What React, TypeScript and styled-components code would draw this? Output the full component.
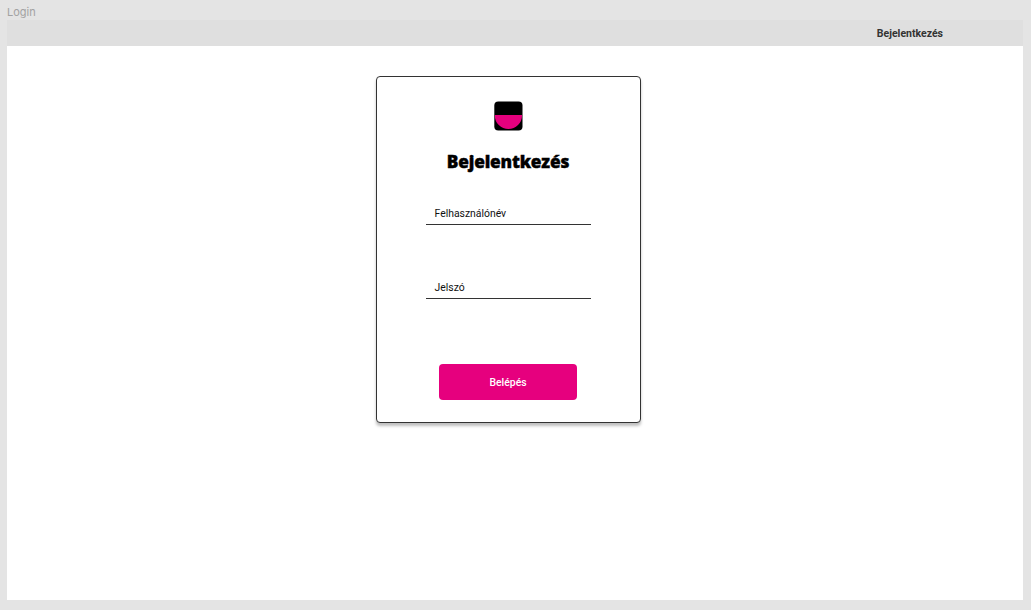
import React from 'react';
import styled, { createGlobalStyle } from 'styled-components';

const GlobalStyle = createGlobalStyle`
  *, *::before, *::after { box-sizing: border-box; }
  body { margin: 0; background: #e4e4e4; font-family: Roboto, sans-serif; }
`;

const Canvas = styled.div`
  display: flex;
  flex-direction: column;
  width: 1031px;
  height: 610px;
  padding: 0 8px 10px 7px;
  overflow: hidden;
`;

const FrameLabel = styled.div`
  flex: none;
  height: 20px;
  padding-top: 5px;
  font: 400 11px/14px Inter, sans-serif;
  color: #a2a2a2;
`;

const Frame = styled.main`
  flex: 1;
  display: flex;
  flex-direction: column;
  align-items: center;
  background: #fff;
`;

const TopBar = styled.header`
  display: flex;
  justify-content: flex-end;
  align-items: center;
  align-self: stretch;
  height: 26px;
  padding: 1px 80px 0 0;
  background: #dfdfdf;
`;

const NavLink = styled.a`
  font-size: 10.5px;
  line-height: 15px;
  font-weight: 700;
  color: #333;
`;

const Card = styled.form`
  display: flex;
  flex-direction: column;
  align-items: center;
  width: 265px;
  height: 347px;
  margin: 30px 13px 0 0;
  padding: 24px 1px 0 0;
  border: 1px solid #333;
  border-radius: 4px;
  background: #fff;
  box-shadow: 0 3px 3px rgba(0, 0, 0, 0.25);
`;

const Logo = styled.svg`
  display: block;
  width: 29px;
  height: 30px;
`;

const Title = styled.h1`
  margin: 17px 0 0;
  font: 800 17.3px/28px 'Open Sans', sans-serif;
  letter-spacing: -0.2px;
  -webkit-text-stroke: 0.4px #000;
  color: #000;
`;

const Field = styled.label<{ $gap: number }>`
  display: block;
  width: 165px;
  height: 24px;
  margin-top: ${({ $gap }) => $gap}px;
  padding: 6px 9px 0;
  border-bottom: 1px solid #333;
  font-size: 10.4px;
  line-height: 14px;
  color: #111;
`;

const Submit = styled.button`
  width: 138px;
  height: 36px;
  margin-top: 65px;
  padding: 1px 0 0;
  border: 0;
  border-radius: 4px;
  background: #e6007e;
  font: 500 10.4px/15px Roboto, sans-serif;
  color: #fff;
`;

export default function App() {
  return (
    <>
      <GlobalStyle />
      <Canvas>
        <FrameLabel>Login</FrameLabel>
        <Frame>
          <TopBar>
            <NavLink>Bejelentkezés</NavLink>
          </TopBar>
          <Card>
            <Logo viewBox="0 0 29 30" aria-hidden="true">
              <rect x="0.3" y="0.4" width="28.2" height="29" rx="4" fill="#000" />
              <path d="M0.8 14h27.2v0.4a13.6 13.6 0 0 1-27.2 0z" fill="#e6007e" />
            </Logo>
            <Title>Bejelentkezés</Title>
            <Field $gap={25}>Felhasználónév</Field>
            <Field $gap={50}>Jelszó</Field>
            <Submit type="button">Belépés</Submit>
          </Card>
        </Frame>
      </Canvas>
    </>
  );
}
